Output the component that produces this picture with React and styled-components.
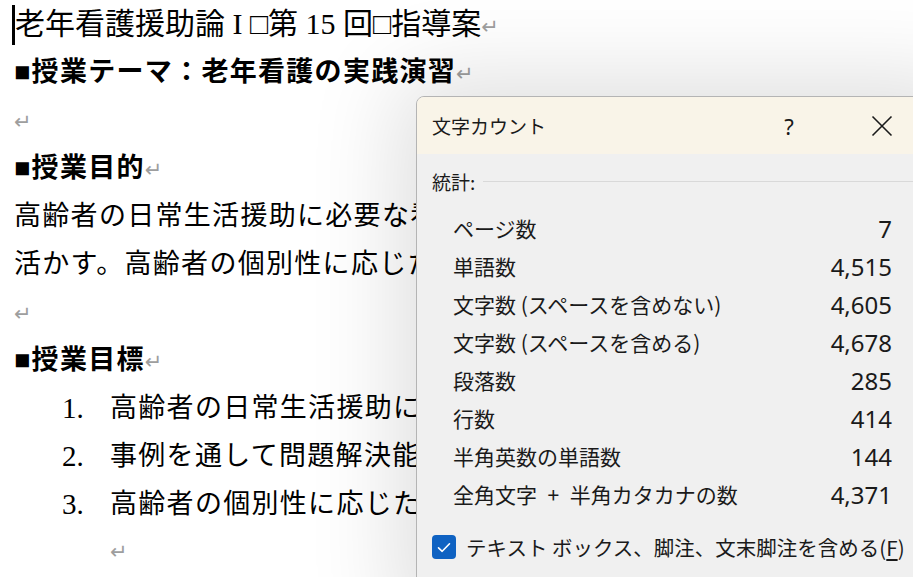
import React from "react"
import styled, { createGlobalStyle } from "styled-components"

const GlobalStyle = createGlobalStyle`
  html, body {
    margin: 0;
    padding: 0;
    background: #ffffff;
    overflow: hidden;
  }
  #root {
    width: 913px;
    height: 577px;
  }
`

const stats = [
  { label: "ページ数", value: "7" },
  { label: "単語数", value: "4,515" },
  { label: "文字数 (スペースを含めない)", value: "4,605" },
  { label: "文字数 (スペースを含める)", value: "4,678" },
  { label: "段落数", value: "285" },
  { label: "行数", value: "414" },
  { label: "半角英数の単語数", value: "144" },
  { label: "全角文字\u2002+\u2002半角カタカナの数", value: "4,371" },
]

// the dialog hides the rest of these lines
const goals = ["高齢者の日常生活援助に", "事例を通して問題解決能", "高齢者の個別性に応じた"]

const App = () => {
  return (
    <Page>
      <GlobalStyle />
      <Doc>
        <Line $size={30}>
          <Caret />
          老年看護援助論 I □第 15 回□指導案
          <Mark />
        </Line>
        <Line $bold>
          ■授業テーマ：老年看護の実践演習
          <Mark />
        </Line>
        <Line>
          <Mark />
        </Line>
        <Line $bold>
          ■授業目的
          <Mark />
        </Line>
        <Line $clip>高齢者の日常生活援助に必要な看</Line>
        <Line $clip>活かす。高齢者の個別性に応じた</Line>
        <Line>
          <Mark />
        </Line>
        <Line $bold>
          ■授業目標
          <Mark />
        </Line>
        {goals.map((goal, index) => (
          <ListLine key={index}>
            <Num>{index + 1}.</Num>
            <span>{goal}</span>
          </ListLine>
        ))}
        <ListLine>
          <Num />
          <Mark />
        </ListLine>
      </Doc>

      <Dialog>
        <TitleBar>
          <Title>文字カウント</Title>
          <HelpButton>?</HelpButton>
          <CloseButton>
            <svg width="22" height="22" viewBox="0 0 22 22">
              <path
                d="M1.5 1.5 L20.5 20.5 M20.5 1.5 L1.5 20.5"
                stroke="#1a1a1a"
                strokeWidth="1.6"
                fill="none"
              />
            </svg>
          </CloseButton>
        </TitleBar>
        <Body>
          <GroupHead>
            <span>統計:</span>
            <Rule />
          </GroupHead>
          <StatList>
            {stats.map(s => (
              <StatRow key={s.label}>
                <span>{s.label}</span>
                <Value>{s.value}</Value>
              </StatRow>
            ))}
          </StatList>
          <CheckRow>
            <Check>
              <svg width="14" height="11" viewBox="0 0 14 11">
                <path
                  d="M1.5 5.8 L5.2 9.3 L12.5 1.8"
                  stroke="#ffffff"
                  strokeWidth="1.6"
                  fill="none"
                  strokeLinecap="round"
                  strokeLinejoin="round"
                />
              </svg>
            </Check>
            <span>
              テキスト ボックス、脚注、文末脚注を含める(<u>F</u>)
            </span>
          </CheckRow>
        </Body>
      </Dialog>
    </Page>
  )
}

const Page = styled.div`
  position: relative;
  width: 913px;
  height: 577px;
  overflow: hidden;
  background: #ffffff;
`

const Doc = styled.div`
  padding-left: 14px;
  color: #000000;
  font-family: "Liberation Serif", "Noto Sans CJK JP", serif;
`

const Line = styled.div`
  height: 48px;
  line-height: 48px;
  font-size: ${({ $size }) => ($size ? `${$size}px` : "27px")};
  font-weight: ${({ $bold }) => ($bold ? 700 : 400)};
  letter-spacing: ${({ $size }) => ($size ? "0" : "1.3px")};
  white-space: nowrap;
  ${({ $clip }) => $clip && "width: 402px; overflow: hidden;"}
`

const ListLine = styled.div`
  display: flex;
  width: 402px;
  overflow: hidden;
  height: 48px;
  line-height: 48px;
  font-size: 27px;
  letter-spacing: 1.3px;
  white-space: nowrap;
  padding-left: 48px;
  box-sizing: border-box;
`

const Num = styled.span`
  width: 48px;
  flex-shrink: 0;
  font-size: 29px;
  letter-spacing: 0;
`

const Caret = styled.span`
  display: inline-block;
  width: 3px;
  height: 40px;
  background: #000000;
  vertical-align: middle;
  margin: -4px 0 0 -2px;
`

const Mark = styled.span`
  display: inline-block;
  font-family: "DejaVu Sans", sans-serif;
  font-size: 21px;
  font-weight: 400;
  color: #9e9e9e;
  letter-spacing: 0;
  &::before {
    content: "↵";
  }
`

const Dialog = styled.div`
  position: absolute;
  left: 416px;
  top: 96px;
  width: 540px;
  height: 520px;
  background: #f0f0f0;
  border: 1px solid #b4b4b4;
  border-radius: 8px;
  box-shadow: 0 0 90px 18px rgba(0, 0, 0, 0.13);
  overflow: hidden;
  font-family: "Noto Sans CJK JP", "Noto Sans", sans-serif;
  color: #1a1a1a;
`

const TitleBar = styled.div`
  display: flex;
  align-items: center;
  height: 57px;
  padding-left: 15px;
  background: #f9f4e8;
`

const Title = styled.div`
  flex: 1;
  font-size: 19px;
`

const HelpButton = styled.div`
  width: 24px;
  text-align: center;
  font-family: "Noto Sans", sans-serif;
  font-size: 22px;
  margin-right: 70px;
`

const CloseButton = styled.div`
  display: flex;
  margin-right: 64px;
`

const Body = styled.div`
  padding: 11px 0 0 15px;
`

const GroupHead = styled.div`
  display: flex;
  align-items: center;
  font-size: 19px;
  height: 32px;
`

const Rule = styled.div`
  flex: 1;
  height: 1px;
  background: #d9d9d9;
  margin-left: 8px;
`

const StatList = styled.div`
  padding: 12px 65px 0 21px;
`

const StatRow = styled.div`
  display: flex;
  justify-content: space-between;
  align-items: center;
  height: 38px;
  font-size: 21px;
`

const Value = styled.span`
  font-family: "Noto Sans", sans-serif;
  font-size: 24px;
`

const CheckRow = styled.div`
  display: flex;
  align-items: center;
  gap: 10px;
  margin-top: 19px;
  font-size: 20.5px;
  u {
    text-underline-offset: 3px;
  }
`

const Check = styled.div`
  width: 24px;
  height: 24px;
  border-radius: 4px;
  background: #0f62c2;
  display: flex;
  align-items: center;
  justify-content: center;
`

export default App
